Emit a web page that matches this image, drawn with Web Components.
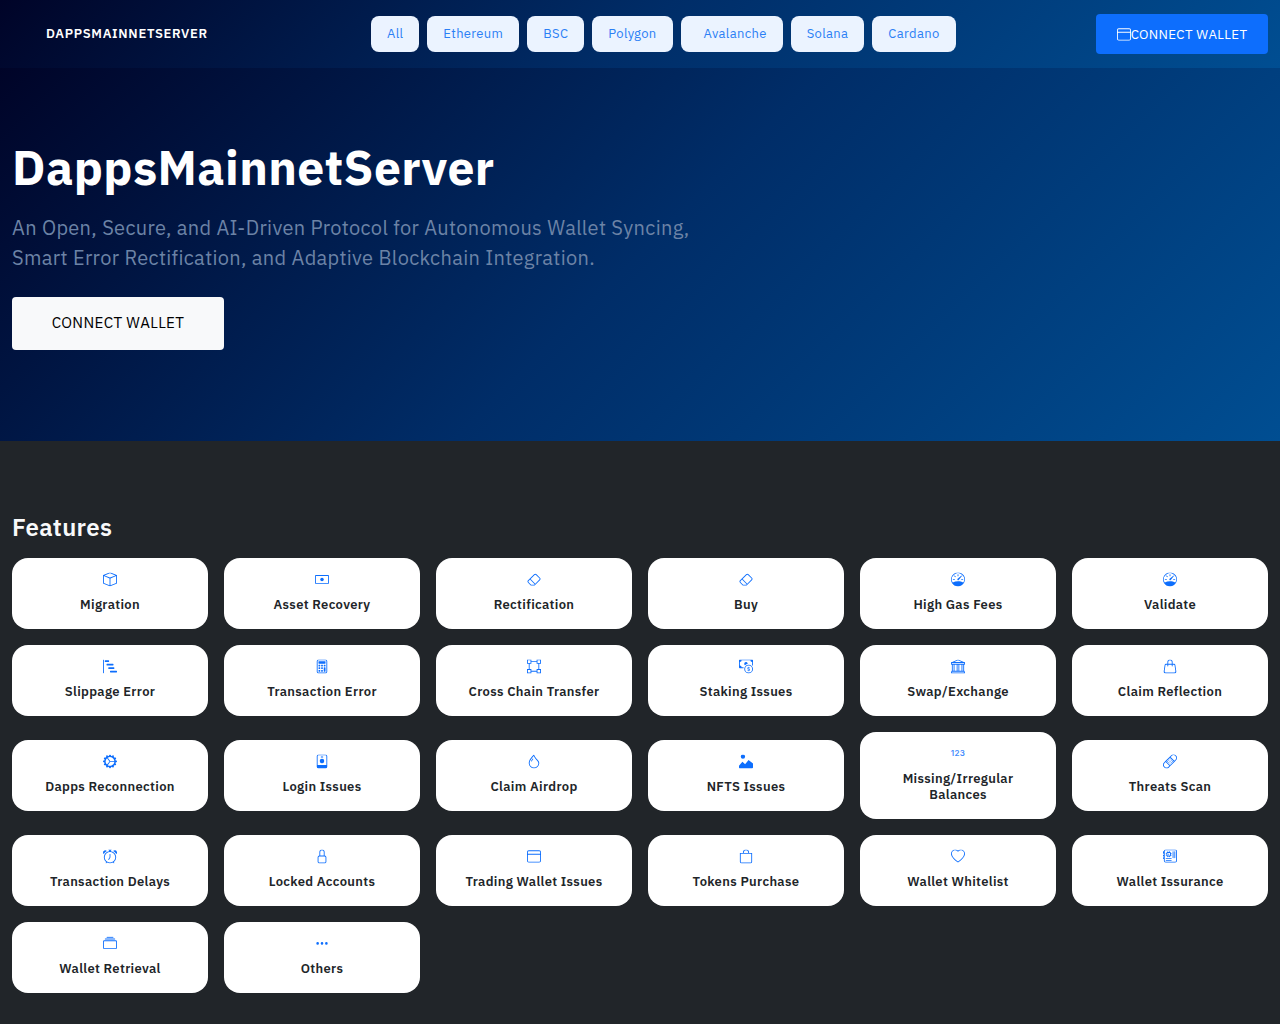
<!DOCTYPE html>
<html><head><meta charset="utf-8"><title>DappsMainnetServer</title>
<style>
html,body{margin:0;padding:0;background:#212529}
body{font-family:"IBM Plex Sans","Noto Sans",sans-serif;color:#212529}
</style></head><body>
<app-nav></app-nav>
<app-hero></app-hero>
<app-features></app-features>
<script>
const IC={
box:'<path d="M8.186 1.113a.5.5 0 0 0-.372 0L1.846 3.5 8 5.961 14.154 3.5 8.186 1.113zM15 4.239l-6.5 2.6v7.922l6.5-2.6V4.24zM7.5 14.762V6.838L1 4.239v7.925l6.5 2.598zM7.443.184a1.5 1.5 0 0 1 1.114 0l7.129 2.852A.5.5 0 0 1 16 3.5v8.662a1 1 0 0 1-.629.928l-7.185 2.874a.5.5 0 0 1-.372 0L.63 13.09a1 1 0 0 1-.63-.928V3.5a.5.5 0 0 1 .314-.464L7.443.184z"/>',
cash:'<path d="M8 10a2 2 0 1 0 0-4 2 2 0 0 0 0 4z"/><path d="M0 4a1 1 0 0 1 1-1h14a1 1 0 0 1 1 1v8a1 1 0 0 1-1 1H1a1 1 0 0 1-1-1V4zm1 0v8h14V4H1z" fill-rule="evenodd"/>',
eraser:'<path d="M8.086 2.207a2 2 0 0 1 2.828 0l3.879 3.879a2 2 0 0 1 0 2.828l-5.5 5.5A2 2 0 0 1 7.879 15H5.12a2 2 0 0 1-1.414-.586l-2.5-2.5a2 2 0 0 1 0-2.828l6.879-6.879zm2.121.707a1 1 0 0 0-1.414 0L4.16 7.547l5.293 5.293 4.633-4.633a1 1 0 0 0 0-1.414l-3.879-3.879zM8.746 13.547 3.453 8.254 1.914 9.793a1 1 0 0 0 0 1.414l2.5 2.5a1 1 0 0 0 .707.293H7.88a1 1 0 0 0 .707-.293l.16-.16z"/>',
speed:'<path d="M8 2a.5.5 0 0 1 .5.5V4a.5.5 0 0 1-1 0V2.5A.5.5 0 0 1 8 2zM3.732 3.732a.5.5 0 0 1 .707 0l.915.914a.5.5 0 1 1-.708.708l-.914-.915a.5.5 0 0 1 0-.707zM2 8a.5.5 0 0 1 .5-.5h1.586a.5.5 0 0 1 0 1H2.5A.5.5 0 0 1 2 8zm9.5 0a.5.5 0 0 1 .5-.5h1.5a.5.5 0 0 1 0 1H12a.5.5 0 0 1-.5-.5zm.754-4.246a.389.389 0 0 0-.527-.02L7.547 7.31A.91.91 0 1 0 8.85 8.569l3.434-4.297a.389.389 0 0 0-.029-.518z"/><path fill-rule="evenodd" d="M6.664 15.889A8 8 0 1 1 9.336.11a8 8 0 0 1-2.672 15.78zm-4.665-4.283A11.945 11.945 0 0 1 8 10c2.186 0 4.236.585 6.001 1.606a7 7 0 1 0-12.002 0z"/>',
steps:'<path d="M.5 0a.5.5 0 0 1 .5.5v15a.5.5 0 0 1-1 0V.5A.5.5 0 0 1 .5 0zM2 1.5a.5.5 0 0 1 .5-.5h4a.5.5 0 0 1 .5.5v1a.5.5 0 0 1-.5.5h-4a.5.5 0 0 1-.5-.5v-1zm2 4a.5.5 0 0 1 .5-.5h7a.5.5 0 0 1 .5.5v1a.5.5 0 0 1-.5.5h-7a.5.5 0 0 1-.5-.5v-1zm2 4a.5.5 0 0 1 .5-.5h6a.5.5 0 0 1 .5.5v1a.5.5 0 0 1-.5.5h-6a.5.5 0 0 1-.5-.5v-1zm2 4a.5.5 0 0 1 .5-.5h7a.5.5 0 0 1 .5.5v1a.5.5 0 0 1-.5.5h-7a.5.5 0 0 1-.5-.5v-1z"/>',
calc:'<path d="M12 1a1 1 0 0 1 1 1v12a1 1 0 0 1-1 1H4a1 1 0 0 1-1-1V2a1 1 0 0 1 1-1h8zM4 0a2 2 0 0 0-2 2v12a2 2 0 0 0 2 2h8a2 2 0 0 0 2-2V2a2 2 0 0 0-2-2H4z"/><path d="M4 2.5a.5.5 0 0 1 .5-.5h7a.5.5 0 0 1 .5.5v2a.5.5 0 0 1-.5.5h-7a.5.5 0 0 1-.5-.5v-2zm0 4a.5.5 0 0 1 .5-.5h1a.5.5 0 0 1 .5.5v1a.5.5 0 0 1-.5.5h-1a.5.5 0 0 1-.5-.5v-1zm0 3a.5.5 0 0 1 .5-.5h1a.5.5 0 0 1 .5.5v1a.5.5 0 0 1-.5.5h-1a.5.5 0 0 1-.5-.5v-1zm0 3a.5.5 0 0 1 .5-.5h1a.5.5 0 0 1 .5.5v1a.5.5 0 0 1-.5.5h-1a.5.5 0 0 1-.5-.5v-1zm3-6a.5.5 0 0 1 .5-.5h1a.5.5 0 0 1 .5.5v1a.5.5 0 0 1-.5.5h-1a.5.5 0 0 1-.5-.5v-1zm0 3a.5.5 0 0 1 .5-.5h1a.5.5 0 0 1 .5.5v1a.5.5 0 0 1-.5.5h-1a.5.5 0 0 1-.5-.5v-1zm0 3a.5.5 0 0 1 .5-.5h1a.5.5 0 0 1 .5.5v1a.5.5 0 0 1-.5.5h-1a.5.5 0 0 1-.5-.5v-1zm3-6a.5.5 0 0 1 .5-.5h1a.5.5 0 0 1 .5.5v1a.5.5 0 0 1-.5.5h-1a.5.5 0 0 1-.5-.5v-1zm0 3a.5.5 0 0 1 .5-.5h1a.5.5 0 0 1 .5.5v4a.5.5 0 0 1-.5.5h-1a.5.5 0 0 1-.5-.5v-4z"/>',
bbox:'<path d="M5 2V0H0v5h2v6H0v5h5v-2h6v2h5v-5h-2V5h2V0h-5v2H5zm6 1v2h2v6h-2v2H5v-2H3V5h2V3h6zm1-2h3v3h-3V1zm3 11v3h-3v-3h3zM4 15H1v-3h3v3zM1 4V1h3v3H1z"/>',
coin:'<path fill-rule="evenodd" d="M11 15a4 4 0 1 0 0-8 4 4 0 0 0 0 8zm5-4a5 5 0 1 1-10 0 5 5 0 0 1 10 0z"/><path d="M9.438 11.944c.047.596.518 1.06 1.363 1.116v.44h.375v-.443c.875-.061 1.386-.529 1.386-1.207 0-.618-.39-.936-1.09-1.1l-.296-.07v-1.2c.376.043.614.248.671.532h.658c-.047-.575-.54-1.024-1.329-1.073V8.5h-.375v.45c-.747.073-1.255.522-1.255 1.158 0 .562.378.92 1.007 1.066l.248.061v1.272c-.384-.058-.639-.27-.696-.563h-.668zm1.36-1.354c-.369-.085-.569-.26-.569-.522 0-.294.216-.514.572-.578v1.1h-.003zm.432.746c.449.104.655.272.655.569 0 .339-.257.571-.709.614v-1.195l.054.012z"/><path d="M1 0a1 1 0 0 0-1 1v8a1 1 0 0 0 1 1h4.083c.058-.344.145-.678.258-1H3a2 2 0 0 0-2-2V3a2 2 0 0 0 2-2h10a2 2 0 0 0 2 2v3.528c.38.34.717.728 1 1.154V1a1 1 0 0 0-1-1H1z"/><path d="M9.998 5.083 10 5a2 2 0 1 0-3.132 1.65 5.982 5.982 0 0 1 3.13-1.567z"/>',
bank:'<path d="m8 0 6.61 3h.89a.5.5 0 0 1 .5.5v2a.5.5 0 0 1-.5.5H15v7a.5.5 0 0 1 .485.38l.5 2a.498.498 0 0 1-.485.62H.5a.498.498 0 0 1-.485-.62l.5-2A.501.501 0 0 1 1 13V6H.5a.5.5 0 0 1-.5-.5v-2A.5.5 0 0 1 .5 3h.89L8 0ZM3.777 3h8.447L8 1 3.777 3ZM2 6v7h1V6H2Zm2 0v7h2.5V6H4Zm3.5 0v7h1V6h-1Zm2 0v7H12V6H9.5ZM13 6v7h1V6h-1Zm2-1V4H1v1h14Zm-.39 9H1.39l-.25 1h13.72l-.25-1Z"/>',
handbag:'<path d="M8 1a2 2 0 0 1 2 2v2H6V3a2 2 0 0 1 2-2zm3 4V3a3 3 0 1 0-6 0v2H3.361a1.5 1.5 0 0 0-1.483 1.277L.85 13.13A2.5 2.5 0 0 0 3.322 16h9.356a2.5 2.5 0 0 0 2.472-2.87l-1.028-6.853A1.5 1.5 0 0 0 12.64 5H11zm-1 1v1.5a.5.5 0 0 0 1 0V6h1.639a.5.5 0 0 1 .494.426l1.028 6.851A1.5 1.5 0 0 1 12.678 15H3.322a1.5 1.5 0 0 1-1.483-1.723l1.028-6.851A.5.5 0 0 1 3.36 6H5v1.5a.5.5 0 1 0 1 0V6h4z"/>',
gear:'<path d="M7.068.727c.243-.97 1.62-.97 1.864 0l.071.286a.96.96 0 0 0 1.622.434l.205-.211c.695-.719 1.888-.03 1.613.931l-.08.284a.96.96 0 0 0 1.187 1.187l.283-.081c.96-.275 1.65.918.931 1.613l-.211.205a.96.96 0 0 0 .434 1.622l.286.071c.97.243.97 1.62 0 1.864l-.286.071a.96.96 0 0 0-.434 1.622l.211.205c.719.695.03 1.888-.931 1.613l-.284-.08a.96.96 0 0 0-1.187 1.187l.081.283c.275.96-.918 1.65-1.613.931l-.205-.211a.96.96 0 0 0-1.622.434l-.071.286c-.243.97-1.62.97-1.864 0l-.071-.286a.96.96 0 0 0-1.622-.434l-.205.211c-.695.719-1.888.03-1.613-.931l.08-.284a.96.96 0 0 0-1.186-1.187l-.284.081c-.96.275-1.65-.918-.931-1.613l.211-.205a.96.96 0 0 0-.434-1.622l-.286-.071c-.97-.243-.97-1.62 0-1.864l.286-.071a.96.96 0 0 0 .434-1.622l-.211-.205c-.719-.695-.03-1.888.931-1.613l.284.08a.96.96 0 0 0 1.187-1.186l-.081-.284c-.275-.96.918-1.65 1.613-.931l.205.211a.96.96 0 0 0 1.622-.434l.071-.286zM12.973 8.5H8.25l-2.834 3.779A4.998 4.998 0 0 0 12.973 8.5zm0-1a4.998 4.998 0 0 0-7.557-3.779l2.834 3.78h4.723zM5.048 3.967c-.03.021-.058.043-.087.065l.087-.065zm-.431.355A4.984 4.984 0 0 0 3.002 8c0 1.455.622 2.765 1.615 3.678L7.375 8 4.617 4.322zm.344 7.646.087.065-.087-.065z"/>',
badge:'<path fill-rule="evenodd" d="M4 0h8a2 2 0 0 1 2 2v12a2 2 0 0 1-2 2H4a2 2 0 0 1-2-2V2a2 2 0 0 1 2-2zm0 1a1 1 0 0 0-1 1v10h10V2a1 1 0 0 0-1-1H4z"/><circle cx="8" cy="7.5" r="2.6"/><rect x="6.5" y="2.4" width="3" height="1" rx=".5"/>',
drop:'<path d="M7.21.8C7.69.295 8 0 8 0c.109.363.234.708.371 1.038.812 1.946 2.073 3.35 3.197 4.6C12.878 7.096 14 8.345 14 10a6 6 0 0 1-12 0C2 6.668 5.58 2.517 7.21.8zm.413 1.021A31.25 31.25 0 0 0 5.794 3.99c-.726.95-1.436 2.008-1.96 3.07C3.304 8.133 3 9.138 3 10a5 5 0 0 0 10 0c0-1.201-.796-2.157-2.181-3.7l-.03-.032C9.75 5.11 8.5 3.72 7.623 1.82z"/><path d="M4.553 7.776c.82-1.641 1.717-2.753 2.093-3.13l.708.708c-.29.29-1.128 1.311-1.907 2.87l-.894-.448z"/>',
img:'<path d="M7 2.5a2.5 2.5 0 1 1-5 0 2.5 2.5 0 0 1 5 0zm4.225 4.053a.5.5 0 0 0-.577.093l-3.71 4.71-2.66-2.772a.5.5 0 0 0-.63.062L.002 13v2a1 1 0 0 0 1 1h14a1 1 0 0 0 1-1v-4.5l-4.777-3.947z"/>',
bandaid:'<path d="M14.121 1.879a3 3 0 0 0-4.242 0L8.733 3.026l4.261 4.26 1.127-1.165a3 3 0 0 0 0-4.242ZM12.293 8 8.027 3.734 3.738 8.031 8 12.293 12.293 8Zm-5.006 4.994L3.03 8.737 1.879 9.88a3 3 0 0 0 4.241 4.24l.006-.006 1.16-1.121ZM2.679 7.676l6.492-6.504a4 4 0 0 1 5.66 5.653l-1.477 1.529-5.006 5.006-1.523 1.472a4 4 0 0 1-5.653-5.66l.001-.002 1.505-1.492.001-.002Z"/><path d="M5.56 7.646a.5.5 0 1 1-.706.708.5.5 0 0 1 .707-.708Zm1.415-1.414a.5.5 0 1 1-.707.707.5.5 0 0 1 .707-.707ZM8.39 4.818a.5.5 0 1 1-.708.707.5.5 0 0 1 .707-.707Zm0 5.657a.5.5 0 1 1-.708.707.5.5 0 0 1 .707-.707ZM9.803 9.06a.5.5 0 1 1-.707.708.5.5 0 0 1 .707-.707Zm1.414-1.414a.5.5 0 1 1-.706.708.5.5 0 0 1 .707-.708ZM6.975 9.06a.5.5 0 1 1-.707.708.5.5 0 0 1 .707-.707ZM8.39 7.646a.5.5 0 1 1-.708.708.5.5 0 0 1 .707-.708Zm1.413-1.414a.5.5 0 1 1-.707.707.5.5 0 0 1 .707-.707Z"/>',
alarm:'<path d="M8.5 5.5a.5.5 0 0 0-1 0v3.362l-1.429 2.38a.5.5 0 1 0 .858.515l1.5-2.5A.5.5 0 0 0 8.5 9V5.5z"/><path d="M6.5 0a.5.5 0 0 0 0 1H7v1.07a7.001 7.001 0 0 0-3.273 12.474l-.602.602a.5.5 0 0 0 .707.708l.746-.746A6.97 6.97 0 0 0 8 16a6.97 6.97 0 0 0 3.422-.892l.746.746a.5.5 0 0 0 .707-.708l-.601-.602A7.001 7.001 0 0 0 9 2.07V1h.5a.5.5 0 0 0 0-1h-3zm1.038 3.018a6.093 6.093 0 0 1 .924 0 6 6 0 1 1-.924 0zM0 3.5c0 .753.333 1.429.86 1.887A8.035 8.035 0 0 1 4.387 1.86 2.5 2.5 0 0 0 0 3.5zM13.5 1c-.753 0-1.429.333-1.887.86a8.035 8.035 0 0 1 3.527 3.527A2.5 2.5 0 0 0 13.5 1z"/>',
lock:'<path d="M8 1a2 2 0 0 1 2 2v4H6V3a2 2 0 0 1 2-2zm3 6V3a3 3 0 0 0-6 0v4a2 2 0 0 0-2 2v5a2 2 0 0 0 2 2h6a2 2 0 0 0 2-2V9a2 2 0 0 0-2-2zM5 8h6a1 1 0 0 1 1 1v5a1 1 0 0 1-1 1H5a1 1 0 0 1-1-1V9a1 1 0 0 1 1-1z"/>',
window:'<path d="M2 1a2 2 0 0 0-2 2v10a2 2 0 0 0 2 2h12a2 2 0 0 0 2-2V3a2 2 0 0 0-2-2H2zm13 2v2H1V3a1 1 0 0 1 1-1h12a1 1 0 0 1 1 1zM2 14a1 1 0 0 1-1-1V6h14v7a1 1 0 0 1-1 1H2z"/>',
bag:'<path d="M8 1a2.5 2.5 0 0 1 2.5 2.5V4h-5v-.5A2.5 2.5 0 0 1 8 1zm3.5 3v-.5a3.5 3.5 0 1 0-7 0V4H1v10a2 2 0 0 0 2 2h10a2 2 0 0 0 2-2V4h-3.5zM2 5h12v9a1 1 0 0 1-1 1H3a1 1 0 0 1-1-1V5z"/>',
heart:'<path d="m8 2.748-.717-.737C5.6.281 2.514.878 1.4 3.053c-.523 1.023-.641 2.5.314 4.385.92 1.815 2.834 3.989 6.286 6.357 3.452-2.368 5.365-4.542 6.286-6.357.955-1.886.838-3.362.314-4.385C13.486.878 10.4.28 8.717 2.01L8 2.748zM8 15C-7.333 4.868 3.279-3.04 7.824 1.143c.06.055.119.112.176.171a3.12 3.12 0 0 1 .176-.17C12.72-3.042 23.333 4.867 8 15z"/>',
board:'<path d="M11.5 2a.5.5 0 0 1 .5.5v7a.5.5 0 0 1-1 0v-7a.5.5 0 0 1 .5-.5Zm2 0a.5.5 0 0 1 .5.5v7a.5.5 0 0 1-1 0v-7a.5.5 0 0 1 .5-.5Zm-10 8a.5.5 0 0 0 0 1h6a.5.5 0 0 0 0-1h-6Zm0 2a.5.5 0 0 0 0 1h6a.5.5 0 0 0 0-1h-6ZM5 3a1 1 0 0 0-1 1h-.5a.5.5 0 0 0 0 1H4v1h-.5a.5.5 0 0 0 0 1H4a1 1 0 0 0 1 1v.5a.5.5 0 0 0 1 0V8h1v.5a.5.5 0 0 0 1 0V8a1 1 0 0 0 1-1h.5a.5.5 0 0 0 0-1H9V5h.5a.5.5 0 0 0 0-1H9a1 1 0 0 0-1-1v-.5a.5.5 0 0 0-1 0V3H6v-.5a.5.5 0 0 0-1 0V3Zm0 1h3v3H5V4Zm1 1v1h1V5H6Z"/><path d="M1 2a2 2 0 0 1 2-2h11a2 2 0 0 1 2 2v11a2 2 0 0 1-2 2H3a2 2 0 0 1-2-2v-2H.5a.5.5 0 0 1-.5-.5v-1A.5.5 0 0 1 .5 9H1V8H.5a.5.5 0 0 1-.5-.5v-1A.5.5 0 0 1 .5 6H1V5H.5a.5.5 0 0 1-.5-.5v-2A.5.5 0 0 1 .5 2H1Zm1 11a1 1 0 0 0 1 1h11a1 1 0 0 0 1-1V2a1 1 0 0 0-1-1H3a1 1 0 0 0-1 1v11Z"/>',
coll:'<path d="M2.5 3.5a.5.5 0 0 1 0-1h11a.5.5 0 0 1 0 1h-11zm2-2a.5.5 0 0 1 0-1h7a.5.5 0 0 1 0 1h-7zM0 13a1.5 1.5 0 0 0 1.5 1.5h13A1.5 1.5 0 0 0 16 13V6a1.5 1.5 0 0 0-1.5-1.5h-13A1.5 1.5 0 0 0 0 6v7zm1.5.5A.5.5 0 0 1 1 13V6a.5.5 0 0 1 .5-.5h13a.5.5 0 0 1 .5.5v7a.5.5 0 0 1-.5.5h-13z"/>',
dots:'<path d="M3 9.5a1.5 1.5 0 1 1 0-3 1.5 1.5 0 0 1 0 3zm5 0a1.5 1.5 0 1 1 0-3 1.5 1.5 0 0 1 0 3zm5 0a1.5 1.5 0 1 1 0-3 1.5 1.5 0 0 1 0 3z"/>'
};
const FONT='"IBM Plex Sans","Noto Sans",sans-serif';
const GRAD='linear-gradient(135deg,#000428 0%,#002d68 50%,#004e92 100%)';
class AppIcon extends HTMLElement{
  static get observedAttributes(){return ['name']}
  constructor(){super();this.attachShadow({mode:'open'})}
  attributeChangedCallback(){this.render()}
  connectedCallback(){this.render()}
  render(){
    const n=this.getAttribute('name');if(!n)return;const s=this.getAttribute('size')||14;
    this.shadowRoot.innerHTML=`<style>:host{display:inline-flex;align-items:center;justify-content:center;width:${s}px;height:${s}px;flex:none}svg{display:block;fill:currentColor;transform:translateY(.4px)}.num{font:600 8px/1 "Inter",sans-serif;letter-spacing:.3px;opacity:.8}</style>`+
    (n==='123'?'<span class="num">123</span>':`<svg width="${s}" height="${s}" viewBox="0 0 16 16">${IC[n]}</svg>`);
  }
}
customElements.define('app-icon',AppIcon);

class NavPill extends HTMLElement{
  constructor(){super();this.attachShadow({mode:'open'}).innerHTML=`<style>
  :host{display:inline-flex;align-items:center;height:36px;box-sizing:border-box;padding:0 16px 1px;background:#ebf3ff;border-radius:8px;color:#2b7ff5;font:400 13px/20px ${FONT};letter-spacing:.33px}
  :host([gap]){padding-left:23px}
  </style><slot></slot>`}
}
customElements.define('nav-pill',NavPill);

class AppNav extends HTMLElement{
  constructor(){super();this.attachShadow({mode:'open'}).innerHTML=`<style>
  :host{display:flex;align-items:center;justify-content:space-between;height:68px;box-sizing:border-box;padding:0 12px 0 46px;background:${GRAD}}
  .brand{color:#fff;font:600 13px/20px ${FONT};letter-spacing:.7px;white-space:nowrap;width:325px;padding-bottom:1px}
  .pills{display:flex;gap:8px;flex:1}
  .cta{display:flex;align-items:center;justify-content:center;width:172px;height:40px;box-sizing:border-box;padding-bottom:1px;background:#0d6efd;color:#fff;border-radius:4px;font:400 13.3px/20px ${FONT};letter-spacing:.33px}
  </style>
  <div class="brand">DAPPSMAINNETSERVER</div>
  <div class="pills"><nav-pill>All</nav-pill><nav-pill>Ethereum</nav-pill><nav-pill>BSC</nav-pill><nav-pill>Polygon</nav-pill><nav-pill gap>Avalanche</nav-pill><nav-pill>Solana</nav-pill><nav-pill>Cardano</nav-pill></div>
  <div class="cta"><app-icon name="window"></app-icon>CONNECT WALLET</div>`}
}
customElements.define('app-nav',AppNav);

class AppHero extends HTMLElement{
  constructor(){super();this.attachShadow({mode:'open'}).innerHTML=`<style>
  :host{display:block;height:373px;box-sizing:border-box;padding:69px 12px 0;background:${GRAD}}
  h1{margin:0;color:#fff;font:700 48px/60px ${FONT};letter-spacing:.44px}
  p{margin:16px 0 24px;color:#6c83a6;font:400 20px/30px ${FONT};letter-spacing:.33px;max-width:700px}
  .btn{display:flex;align-items:center;justify-content:center;width:212px;height:53px;box-sizing:border-box;padding-bottom:3px;background:#f8f9fa;border-radius:4px;color:#000;font:400 15.2px/24px ${FONT};letter-spacing:.33px}
  </style>
  <h1>DappsMainnetServer</h1>
  <p>An Open, Secure, and AI-Driven Protocol for Autonomous Wallet Syncing,<br>Smart Error Rectification, and Adaptive Blockchain Integration.</p>
  <div class="btn">CONNECT WALLET</div>`}
}
customElements.define('app-hero',AppHero);

class FeatureCard extends HTMLElement{
  constructor(){super();this.attachShadow({mode:'open'}).innerHTML=`<style>
  :host{display:flex;flex-direction:column;align-items:center;box-sizing:border-box;background:#fff;border-radius:16px;padding:14px 16px 16px;color:#0d6efd;text-align:center}
  .t{color:#212529;font:600 13px/16px ${FONT};letter-spacing:.33px;margin-top:11px}
  </style><app-icon></app-icon><div class="t"><slot></slot></div>`}
  connectedCallback(){this.shadowRoot.querySelector('app-icon').setAttribute('name',this.getAttribute('icon'))}
}
customElements.define('feature-card',FeatureCard);

const CARDS=[['box','Migration'],['cash','Asset Recovery'],['eraser','Rectification'],['eraser','Buy'],['speed','High Gas Fees'],['speed','Validate'],
['steps','Slippage Error'],['calc','Transaction Error'],['bbox','Cross Chain Transfer'],['coin','Staking Issues'],['bank','Swap/Exchange'],['handbag','Claim Reflection'],
['gear','Dapps Reconnection'],['badge','Login Issues'],['drop','Claim Airdrop'],['img','NFTS Issues'],['123','Missing/Irregular Balances'],['bandaid','Threats Scan'],
['alarm','Transaction Delays'],['lock','Locked Accounts'],['window','Trading Wallet Issues'],['bag','Tokens Purchase'],['heart','Wallet Whitelist'],['board','Wallet Issurance'],
['coll','Wallet Retrieval'],['dots','Others']];
class AppFeatures extends HTMLElement{
  constructor(){super();this.attachShadow({mode:'open'}).innerHTML=`<style>
  :host{display:block;background:#212529;padding:71px 12px 31px}
  h2{margin:0 0 16px;color:#f8f9fa;font:600 24px/30px ${FONT};letter-spacing:.33px}
  .grid{display:grid;grid-template-columns:repeat(6,196px);gap:16px;align-items:center}
  </style><h2>Features</h2><div class="grid">${CARDS.map(c=>`<feature-card icon="${c[0]}">${c[1]}</feature-card>`).join('')}</div>`}
}
customElements.define('app-features',AppFeatures);
</script>
</body></html>
